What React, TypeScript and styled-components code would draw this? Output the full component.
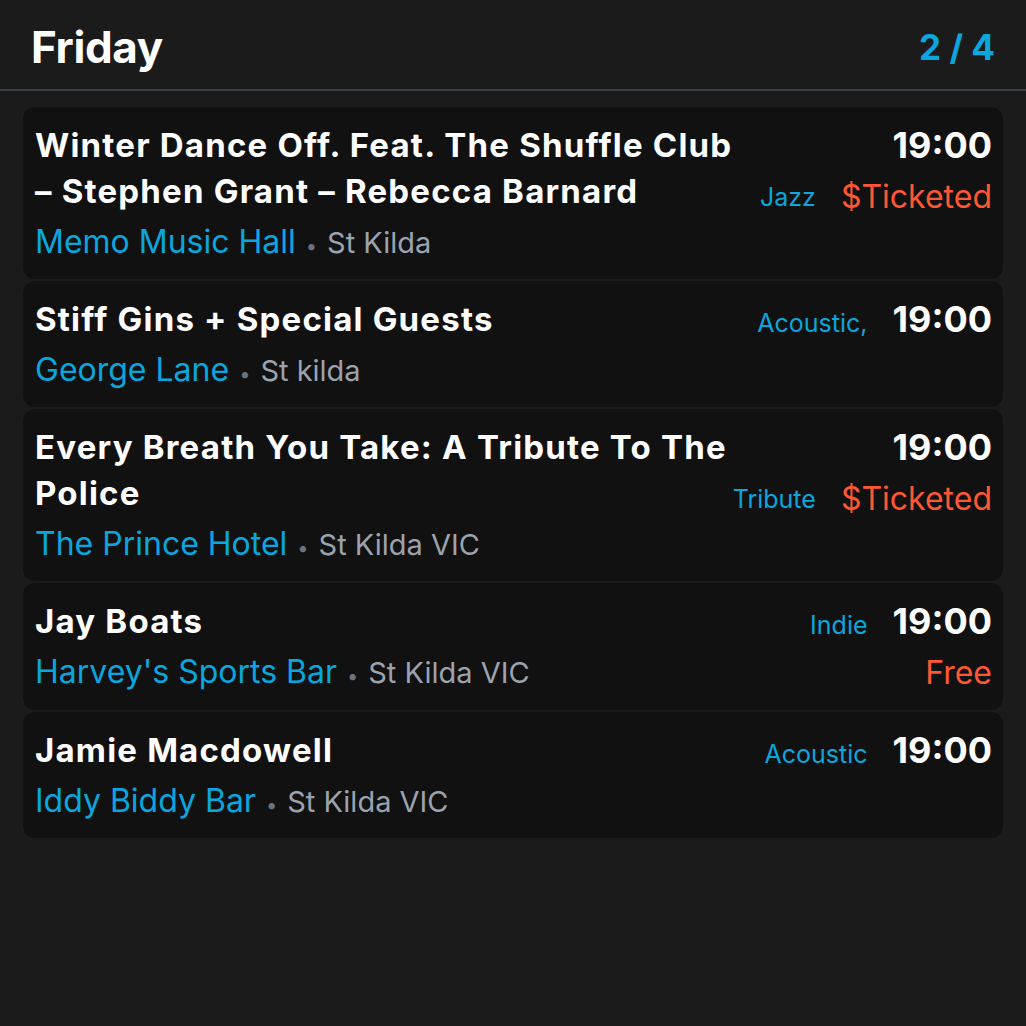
import React from "react";
import styled, { createGlobalStyle } from "styled-components";

const GlobalStyle = createGlobalStyle`
  html, body {
    margin: 0;
    padding: 0;
    background: #1b1b1b;
    min-height: 100%;
  }
  body {
    font-family: Inter, "Noto Sans", "Liberation Sans", sans-serif;
    -webkit-font-smoothing: antialiased;
  }
`;

const Page = styled.div`
  min-height: 1026px;
  background: #1b1b1b;
  color: #ffffff;
`;

const Header = styled.header`
  height: 91px;
  box-sizing: border-box;
  padding: 4px 31px 0 31px;
  display: flex;
  align-items: center;
  justify-content: space-between;
  border-bottom: 2px solid #3b414c;
`;

const DayTitle = styled.h1`
  margin: 0;
  font-size: 44px;
  font-weight: 700;
  letter-spacing: -0.4px;
  color: #ffffff;
`;

const PageCount = styled.div`
  font-size: 35px;
  font-weight: 700;
  color: #0aa6de;
`;

const List = styled.div`
  padding: 16px 23px;
  display: flex;
  flex-direction: column;
  gap: 2px;
`;

const Card = styled.article`
  background: #111111;
  border-radius: 12px;
  padding: 15px 11px 17px 12px;
  display: flex;
  align-items: flex-start;
  gap: 4px;
`;

const Main = styled.div`
  flex: 1;
  min-width: 0;
`;

const Title = styled.h2`
  margin: 0;
  font-size: 33px;
  line-height: 46px;
  font-weight: 700;
  letter-spacing: 1.2px;
  color: #ffffff;
`;

const VenueLine = styled.div`
  margin-top: 8px;
  height: 40px;
  line-height: 40px;
  display: flex;
  align-items: baseline;
  gap: 10px;
  white-space: nowrap;
`;

const Venue = styled.span`
  font-size: 32px;
  color: #0aa6de;
`;

const Dot = styled.span`
  font-size: 20px;
  color: #6b7280;
`;

const Suburb = styled.span`
  font-size: 29px;
  color: #9ca3af;
`;

const Side = styled.div`
  display: flex;
  flex-direction: column;
  align-items: flex-end;
  flex-shrink: 0;
`;

const TimeRow = styled.div`
  height: 46px;
  display: flex;
  align-items: baseline;
  gap: 25px;
  line-height: 46px;
`;

const PriceRow = styled.div`
  margin-top: 9px;
  height: 40px;
  display: flex;
  align-items: center;
  gap: 25px;
  line-height: 40px;
`;

const Time = styled.span`
  font-size: 36px;
  font-weight: 700;
  color: #ffffff;
`;

const Genre = styled.span`
  font-size: 25px;
  color: #0aa6de;
`;

const Price = styled.span`
  font-size: 32px;
  color: #ff5733;
`;

type EventItem = {
  title: string;
  venue: string;
  suburb: string;
  genre: string;
  genreWithTime: boolean;
  price?: string;
  time: string;
};

const events: EventItem[] = [
  {
    title: "Winter Dance Off. Feat. The Shuffle Club – Stephen Grant – Rebecca Barnard",
    venue: "Memo Music Hall",
    suburb: "St Kilda",
    genre: "Jazz",
    genreWithTime: false,
    price: "$Ticketed",
    time: "19:00",
  },
  {
    title: "Stiff Gins + Special Guests",
    venue: "George Lane",
    suburb: "St kilda",
    genre: "Acoustic,",
    genreWithTime: true,
    time: "19:00",
  },
  {
    title: "Every Breath You Take: A Tribute To The Police",
    venue: "The Prince Hotel",
    suburb: "St Kilda VIC",
    genre: "Tribute",
    genreWithTime: false,
    price: "$Ticketed",
    time: "19:00",
  },
  {
    title: "Jay Boats",
    venue: "Harvey's Sports Bar",
    suburb: "St Kilda VIC",
    genre: "Indie",
    genreWithTime: true,
    price: "Free",
    time: "19:00",
  },
  {
    title: "Jamie Macdowell",
    venue: "Iddy Biddy Bar",
    suburb: "St Kilda VIC",
    genre: "Acoustic",
    genreWithTime: true,
    time: "19:00",
  },
];

export default function App() {
  return (
    <Page>
      <GlobalStyle />
      <Header>
        <DayTitle>Friday</DayTitle>
        <PageCount>2 / 4</PageCount>
      </Header>
      <List>
        {events.map((e, i) => (
          <Card key={i}>
            <Main>
              <Title>{e.title}</Title>
              <VenueLine>
                <Venue>{e.venue}</Venue>
                <Dot>•</Dot>
                <Suburb>{e.suburb}</Suburb>
              </VenueLine>
            </Main>
            <Side>
              <TimeRow>
                {e.genreWithTime && <Genre>{e.genre}</Genre>}
                <Time>{e.time}</Time>
              </TimeRow>
              {(!e.genreWithTime || e.price) && (
                <PriceRow>
                  {!e.genreWithTime && <Genre>{e.genre}</Genre>}
                  {e.price && <Price>{e.price}</Price>}
                </PriceRow>
              )}
            </Side>
          </Card>
        ))}
      </List>
    </Page>
  );
}
